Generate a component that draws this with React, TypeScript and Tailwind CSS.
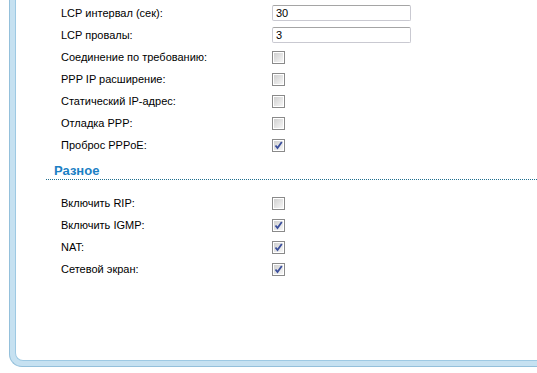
import React from 'react';

type Row = { label: string; kind: 'text' | 'check'; value?: string; checked?: boolean };

const pppRows: Row[] = [
  { label: 'LCP интервал (сек):', kind: 'text', value: '30' },
  { label: 'LCP провалы:', kind: 'text', value: '3' },
  { label: 'Соединение по требованию:', kind: 'check', checked: false },
  { label: 'PPP IP расширение:', kind: 'check', checked: false },
  { label: 'Статический IP-адрес:', kind: 'check', checked: false },
  { label: 'Отладка PPP:', kind: 'check', checked: false },
  { label: 'Проброс PPPoE:', kind: 'check', checked: true },
];

const miscRows: Row[] = [
  { label: 'Включить RIP:', kind: 'check', checked: false },
  { label: 'Включить IGMP:', kind: 'check', checked: true },
  { label: 'NAT:', kind: 'check', checked: true },
  { label: 'Сетевой экран:', kind: 'check', checked: true },
];

function CheckBox({ checked }: { checked?: boolean }) {
  return (
    <div className="w-[13px] h-[13px] border border-[#8a8a8a] bg-white p-px">
      <div className="w-full h-full bg-gradient-to-br from-[#d0d0d0] to-[#f6f6f6] flex items-center justify-center">
        {checked && (
          <svg width="9" height="9" viewBox="0 0 9 9">
            <path d="M1.5 4.5 L3.5 7 L7.8 1" fill="none" stroke="#3b4f9c" strokeWidth="1.8" />
          </svg>
        )}
      </div>
    </div>
  );
}

function FieldRow({ row }: { row: Row }) {
  return (
    <div className="flex items-center h-[22px]">
      <div className="w-[211px] text-black text-[11px]">{row.label}</div>
      {row.kind === 'text' ? (
        <div className="w-[139px] h-[16px] border border-[#c9c9d1] border-t-[#a5a5a5] rounded-[2px] bg-white px-[3px] flex items-center text-[11px] text-black">
          {row.value}
        </div>
      ) : (
        <CheckBox checked={row.checked} />
      )}
    </div>
  );
}

export default function App() {
  return (
    <div
      className="w-[537px] h-[373px] overflow-hidden bg-white"
      style={{ fontFamily: '"Liberation Sans", Arial, sans-serif' }}
    >
      <div className="ml-[9px] w-[600px] h-[367px] border-l border-b border-[#94c0db] rounded-bl-[13px] bg-[#c6e1f1]">
        <div className="ml-[5px] mb-[5px] h-[361px] border-l border-b border-[#9ec9e3] rounded-bl-[8px] bg-white">
          <div className="pt-[2px] pl-[45px]">
            {pppRows.map((r) => (
              <FieldRow key={r.label} row={r} />
            ))}
          </div>
          <div className="ml-[30px] mt-[7px] border-b border-dotted border-[#1e6e8e] h-[17px] pl-[8px] flex items-center text-[13px] leading-[16px]">
            <span className="font-bold text-[#1b80c4]">Разное</span>
          </div>
          <div className="mt-[12px] pl-[45px]">
            {miscRows.map((r) => (
              <FieldRow key={r.label} row={r} />
            ))}
          </div>
        </div>
      </div>
    </div>
  );
}
